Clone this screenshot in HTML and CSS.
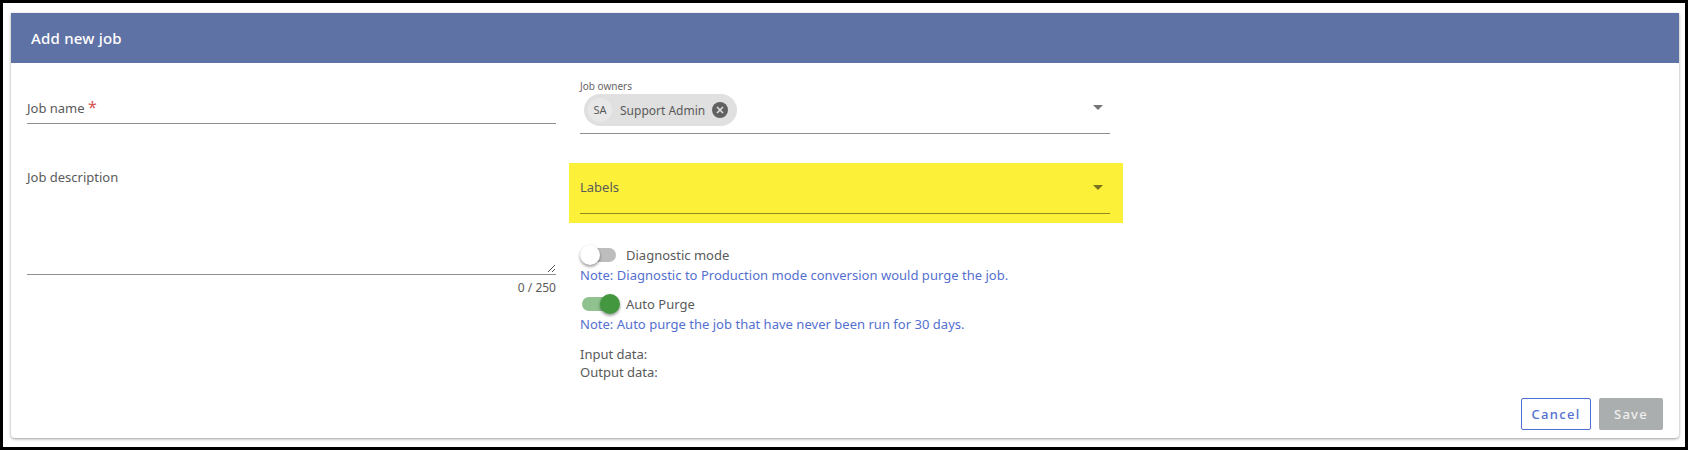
FILE: index.html
```html
<!DOCTYPE html>
<html lang="en">
<head>
<meta charset="utf-8">
<title>Add new job</title>
<link rel="stylesheet" href="styles.css">
</head>
<body>
<main class="frame">
  <section class="card">
    <header class="card-header">Add new job</header>
    <div class="form">
      <div class="col-left">
        <div class="field field-name">
          <span class="field-text">Job name <span class="req">*</span></span>
        </div>
        <div class="field-area">
          <span class="field-text">Job description</span>
          <svg class="resize" width="9" height="9" viewBox="0 0 9 9"><path d="M1 8 8 1M5 8 8 5" stroke="#555" stroke-width="1" fill="none"/></svg>
        </div>
        <div class="counter">0 / 250</div>
      </div>
      <div class="col-right">
        <div class="select select-owners">
          <span class="mini-label">Job owners</span>
          <div class="select-row">
            <span class="chip">
              <span class="avatar">SA</span>
              <span class="chip-text">Support Admin</span>
              <svg class="chip-x" width="16" height="16" viewBox="0 0 16 16"><circle cx="8" cy="8" r="8" fill="#616161"/><path d="M5 5l6 6M11 5l-6 6" stroke="#e0e0e0" stroke-width="1.6"/></svg>
            </span>
            <span class="caret"></span>
          </div>
        </div>
        <div class="highlight">
          <div class="select select-labels">
            <span class="field-text">Labels</span>
            <span class="caret"></span>
          </div>
        </div>
        <div class="toggle-row">
          <span class="switch"><span class="track"></span><span class="thumb"></span></span>
          <span class="toggle-label">Diagnostic mode</span>
        </div>
        <p class="note">Note: Diagnostic to Production mode conversion would purge the job.</p>
        <div class="toggle-row toggle-second">
          <span class="switch on"><span class="track"></span><span class="thumb"></span></span>
          <span class="toggle-label">Auto Purge</span>
        </div>
        <p class="note">Note: Auto purge the job that have never been run for 30 days.</p>
        <div class="data-lines">
          <div>Input data:</div>
          <div>Output data:</div>
        </div>
      </div>
    </div>
    <footer class="actions">
      <button class="btn btn-cancel" type="button">Cancel</button>
      <button class="btn btn-save" type="button">Save</button>
    </footer>
  </section>
</main>
</body>
</html>
```
FILE: styles.css
```css
* { box-sizing: border-box; }
html, body { margin: 0; height: 100%; }
body {
  font-family: "Noto Sans", "Open Sans", sans-serif;
  font-size: 13px;
  color: #5a5a5a;
  background: #000;
}
.frame {
  width: 1688px;
  height: 450px;
  border: 3px solid #000;
  background: #fff;
  padding: 10px 6px 9px 8px;
}
.card {
  height: 100%;
  background: #fff;
  border-radius: 0 0 4px 4px;
  display: flex;
  flex-direction: column;
  box-shadow: 0 1px 3px rgba(0,0,0,.4);
}
.card-header {
  height: 50px;
  flex: none;
  background: #5f72a5;
  color: #fff;
  font-size: 15px;
  font-weight: 500;
  letter-spacing: .2px;
  line-height: 50px;
  padding-left: 20px;
}
.form {
  display: grid;
  grid-template-columns: 529px 530px;
  column-gap: 24px;
  padding: 0 0 0 16px;
  flex: 1;
}
.field-text { line-height: 18px; }
.req { color: #d9534f; font-size: 16px; line-height: 14px; }
.field { border-bottom: 1px solid #8f8f8f; }
.field-name {
  height: 61px;
  display: flex;
  align-items: flex-end;
  padding-bottom: 6px;
}
.field-area {
  position: relative;
  margin-top: 44px;
  height: 107px;
  border-bottom: 1px solid #8f8f8f;
}
.resize { position: absolute; right: 0; bottom: 1px; }
.counter {
  font-size: 12px;
  text-align: right;
  line-height: 16px;
  margin-top: 5px;
}
.select { position: relative; border-bottom: 1px solid #8f8f8f; }
.select-owners { height: 71px; padding-top: 16px; }
.mini-label { display: block; font-size: 10px; line-height: 14px; color: #666; }
.select-row { display: flex; align-items: center; justify-content: space-between; padding-left: 4px; margin-top: 1px; }
.chip {
  display: flex;
  align-items: center;
  height: 32px;
  background: #e0e0e0;
  border-radius: 16px;
  padding: 0 4px;
  width: 153px;
}
.avatar {
  width: 24px;
  height: 24px;
  border-radius: 50%;
  background: #e8e8e8;
  font-size: 11px;
  text-align: center;
  line-height: 24px;
  margin-right: 8px;
}
.chip-text { font-size: 12px; flex: 1; white-space: nowrap; }
.chip-x { margin-right: 5px; }
.caret {
  width: 0;
  height: 0;
  border: 5px solid transparent;
  border-top-color: #757575;
  border-bottom-width: 0;
  margin-right: 7px;
}
.select-owners .caret { margin-top: -5px; }
.highlight {
  margin: 29px -13px 0 -11px;
  height: 60px;
  background: #fdf039;
  padding: 0 13px 0 11px;
}
.select-labels {
  height: 51px;
  display: flex;
  align-items: center;
  justify-content: space-between;
  padding-bottom: 3px;
}
.select-labels .caret { border-top-color: #7a7320; margin-top: 1px; }
.select-labels { border-bottom-color: #8f8a1f; }
.toggle-row { display: flex; align-items: center; height: 20px; margin-top: 22px; }
.toggle-second { margin-top: 10px; }
.switch { position: relative; width: 34px; height: 20px; margin-right: 8px; flex: none; display: block; }
.track { position: absolute; left: 2px; top: 3px; width: 34px; height: 14px; border-radius: 7px; background: #bdbdbd; }
.thumb {
  position: absolute;
  left: 0;
  top: 0;
  width: 20px;
  height: 20px;
  border-radius: 50%;
  background: #fff;
  box-shadow: 0 2px 3px rgba(0,0,0,.3), 0 1px 3px rgba(0,0,0,.15);
}
.on .track { background: #8fc28f; }
.on .thumb { left: 20px; background: #43983f; }
.toggle-label { line-height: 18px; margin-left: 4px; }
.note { margin: 1px 0 0; font-size: 13px; line-height: 18px; letter-spacing: .02px; color: #5470cf; }
.data-lines { margin-top: 12px; line-height: 18px; }
.actions {
  flex: none;
  display: flex;
  justify-content: flex-end;
  gap: 8px;
  padding: 0 16px 8px 0;
}
.btn {
  height: 32px;
  font-family: inherit;
  font-size: 13px;
  font-weight: 500;
  letter-spacing: 1.3px;
  border-radius: 2px;
  padding: 0;
}
.btn-cancel { width: 70px; background: #fff; border: 1px solid #4f6fd0; color: #5470cf; }
.btn-save { width: 64px; background: #abaeae; border: 0; color: #f0f0f0; }
```
